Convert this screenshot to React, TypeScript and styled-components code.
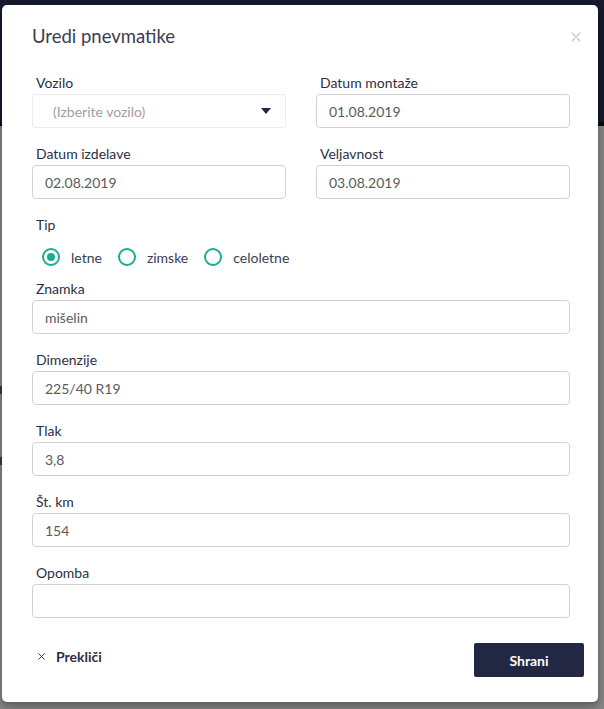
import React from "react";
import styled, { createGlobalStyle } from "styled-components";

const Global = createGlobalStyle`
  html, body { margin: 0; padding: 0; }
  body {
    font-family: Lato, "Noto Sans", Arial, sans-serif;
    background: #868686;
    width: 604px;
    height: 709px;
    overflow: hidden;
  }
  * { box-sizing: border-box; }
`;

const Page = styled.div`
  position: relative;
  width: 604px;
  height: 709px;
  background: #868686;
`;

const TopBand = styled.div`
  height: 126px;
  background: #161a2c;
  border-bottom: 4px solid #0b0b0e;
`;

const BgMark = styled.div<{ $top: number }>`
  position: absolute;
  left: 0;
  top: ${(p) => p.$top}px;
  width: 2px;
  height: 8px;
  background: #6e6243;
  border: 1px solid #3a3a3a;
`;

const Modal = styled.div`
  position: absolute;
  left: 2px;
  top: 5px;
  width: 596px;
  height: 697px;
  background: #ffffff;
  border-radius: 5px;
  box-shadow: 0 4px 10px rgba(0, 0, 0, 0.35);
  display: flex;
  flex-direction: column;
`;

const Header = styled.div`
  display: flex;
  justify-content: space-between;
  align-items: flex-start;
  padding: 19px 16px 0 30px;
  height: 68px;
`;

const Title = styled.h4`
  margin: 0;
  font-size: 18.5px;
  line-height: 24px;
  font-weight: 400;
  color: #3a3d52;
`;

const Close = styled.button`
  border: 0;
  background: none;
  padding: 0;
  margin-top: 7px;
  width: 12px;
  height: 12px;
  display: flex;
  align-items: center;
  justify-content: center;
  cursor: pointer;
`;

const Body = styled.div`
  padding: 0 28px 0 30px;
  display: flex;
  flex-direction: column;
  gap: 16px;
`;

const Row = styled.div`
  display: grid;
  grid-template-columns: 254px 254px;
  column-gap: 30px;
`;

const Field = styled.div`
  display: flex;
  flex-direction: column;
`;

const Label = styled.label`
  display: block;
  padding-left: 4px;
  font-size: 14px;
  line-height: 20px;
  color: #2b2f46;
  margin-bottom: 1px;
`;

const Input = styled.input`
  height: 34px;
  width: 100%;
  border: 1px solid #d2d2d2;
  border-radius: 4px;
  padding: 0 12px;
  font-family: inherit;
  font-size: 14px;
  color: #5a5a5a;
  background: #fff;
  outline: none;
`;

const Select = styled.div`
  height: 34px;
  border: 1px solid #ececec;
  border-radius: 3px;
  display: flex;
  align-items: center;
  justify-content: space-between;
  padding: 0 14px 0 20px;
  font-size: 14px;
  color: #a0a0a0;
`;

const Caret = styled.span`
  width: 0;
  height: 0;
  border-left: 5px solid transparent;
  border-right: 5px solid transparent;
  border-top: 6px solid #222844;
`;

const Group = styled.div`
  display: flex;
  flex-direction: column;
`;

const RadioRow = styled.div`
  display: flex;
  align-items: center;
  gap: 16px;
  height: 22px;
  margin-top: 10px;
  margin-bottom: -5px;
  padding-left: 10px;
`;

const RadioItem = styled.label`
  display: flex;
  align-items: center;
  gap: 11px;
  font-size: 14px;
  color: #3a3d50;
  cursor: pointer;
`;

const RadioCircle = styled.span<{ $checked?: boolean }>`
  width: 18px;
  height: 18px;
  border-radius: 50%;
  border: 2px solid #17ad8e;
  display: flex;
  align-items: center;
  justify-content: center;
  &::after {
    content: "";
    width: 8px;
    height: 8px;
    border-radius: 50%;
    background: ${(p) => (p.$checked ? "#17ad8e" : "transparent")};
  }
`;

const Footer = styled.div`
  margin-top: auto;
  display: flex;
  align-items: center;
  justify-content: space-between;
  padding: 0 14px 25px 36px;
`;

const Cancel = styled.button`
  border: 0;
  background: none;
  padding: 0;
  margin-bottom: 7px;
  display: flex;
  align-items: center;
  gap: 11px;
  font-family: inherit;
  font-size: 14px;
  font-weight: 700;
  color: #2b2f46;
  cursor: pointer;
`;

const Save = styled.button`
  width: 110px;
  height: 34px;
  border: 0;
  border-radius: 2px;
  background: #222844;
  color: #fff;
  font-family: inherit;
  font-size: 14px;
  font-weight: 700;
  cursor: pointer;
`;

const X = ({ size, color, w }: { size: number; color: string; w: number }) => (
  <svg width={size} height={size} viewBox="0 0 10 10">
    <path d="M1 1 L9 9 M9 1 L1 9" stroke={color} strokeWidth={w} strokeLinecap="round" />
  </svg>
);

const fields = [
  { label: "Znamka", value: "mišelin" },
  { label: "Dimenzije", value: "225/40 R19" },
  { label: "Tlak", value: "3,8" },
  { label: "Št. km", value: "154" },
  { label: "Opomba", value: "" },
];

export default function App() {
  return (
    <>
      <Global />
      <Page>
        <TopBand />
        <BgMark $top={386} />
        <BgMark $top={457} />
        <Modal>
          <Header>
            <Title>Uredi pnevmatike</Title>
            <Close aria-label="Zapri">
              <X size={10} color="#c4c4c4" w={1.1} />
            </Close>
          </Header>
          <Body>
            <Row>
              <Field>
                <Label>Vozilo</Label>
                <Select>
                  <span>(Izberite vozilo)</span>
                  <Caret />
                </Select>
              </Field>
              <Field>
                <Label>Datum montaže</Label>
                <Input defaultValue="01.08.2019" />
              </Field>
            </Row>
            <Row>
              <Field>
                <Label>Datum izdelave</Label>
                <Input defaultValue="02.08.2019" />
              </Field>
              <Field>
                <Label>Veljavnost</Label>
                <Input defaultValue="03.08.2019" />
              </Field>
            </Row>
            <Group>
              <Label>Tip</Label>
              <RadioRow>
                <RadioItem>
                  <RadioCircle $checked />
                  letne
                </RadioItem>
                <RadioItem>
                  <RadioCircle />
                  zimske
                </RadioItem>
                <RadioItem>
                  <RadioCircle />
                  celoletne
                </RadioItem>
              </RadioRow>
            </Group>
            {fields.map((f) => (
              <Field key={f.label}>
                <Label>{f.label}</Label>
                <Input defaultValue={f.value} />
              </Field>
            ))}
          </Body>
          <Footer>
            <Cancel>
              <X size={7} color="#2b2f46" w={1.3} />
              Prekliči
            </Cancel>
            <Save>Shrani</Save>
          </Footer>
        </Modal>
      </Page>
    </>
  );
}
